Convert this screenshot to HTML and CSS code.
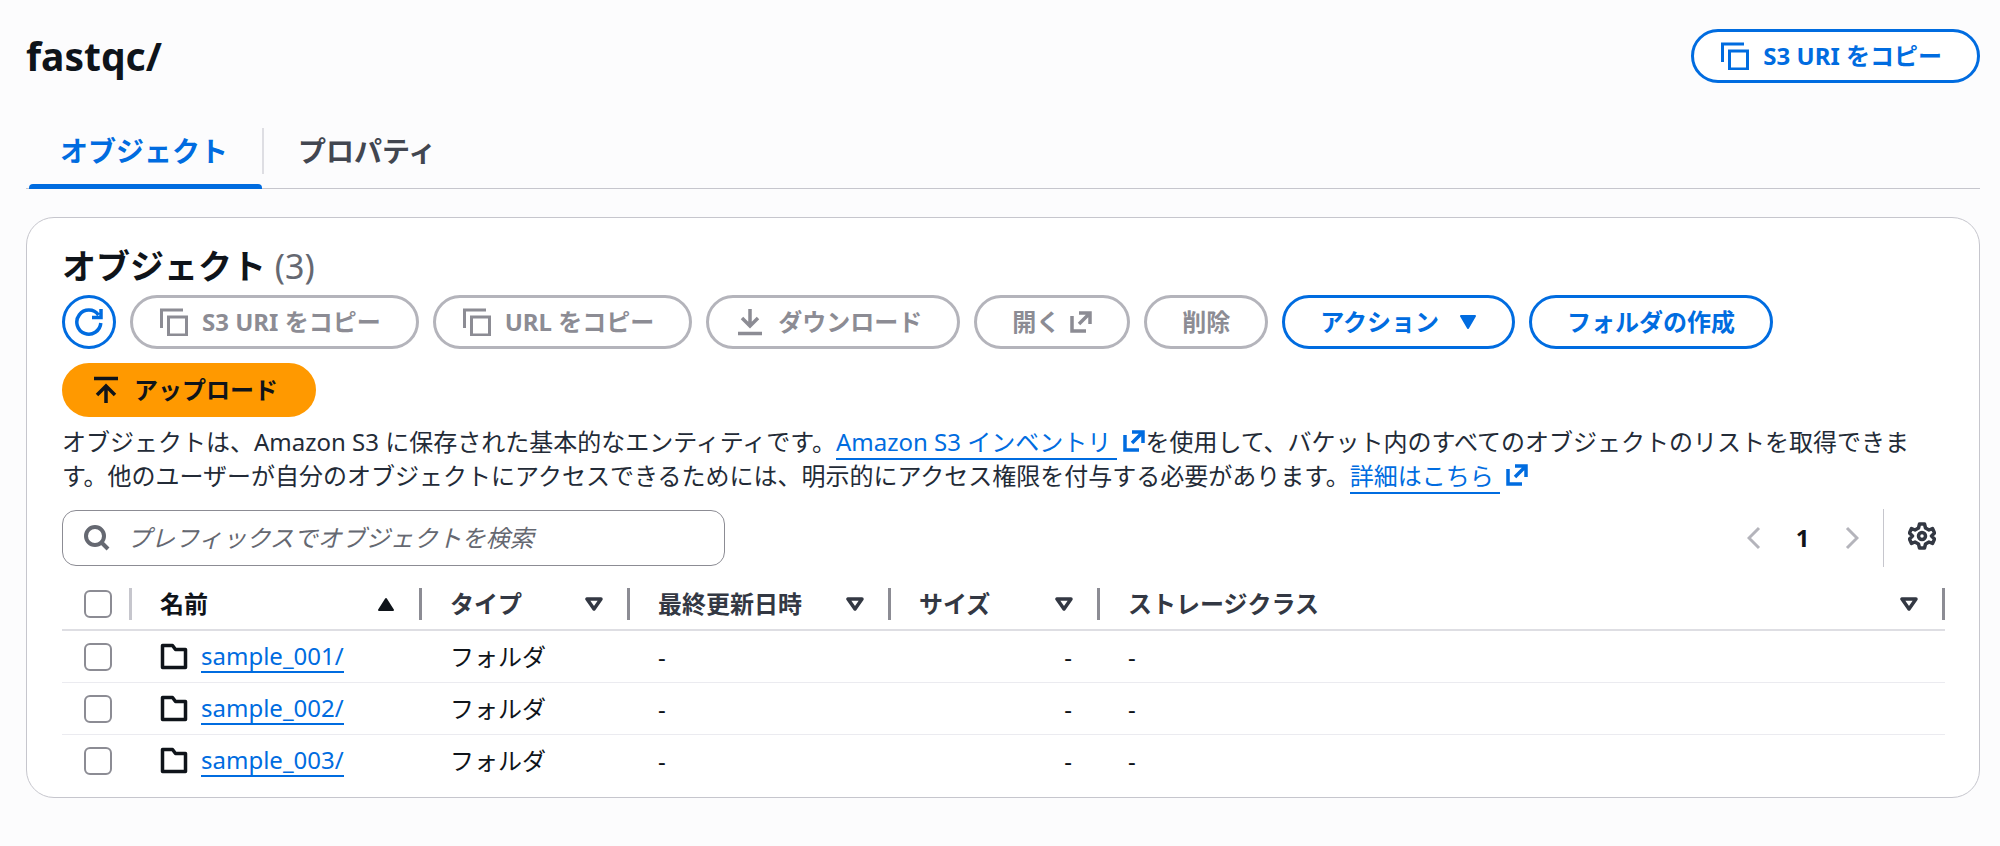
FILE: index.html
```
<!DOCTYPE html>
<html lang="ja">
<head>
    <meta charset="UTF-8">
    <meta name="viewport" content="width=device-width, initial-scale=1.0">
    <title>fastqc/</title>
    <link rel="stylesheet" href="styles.css">
</head>
<body>

    <!-- Shared icons -->
    <svg class="sprite" aria-hidden="true">
        <symbol id="icon-copy" viewBox="0 0 28 28">
            <path d="M1.500 20V2H23M8.500 9h18v18h-18z" fill="none" stroke="currentColor" stroke-width="3"/>
        </symbol>
        <symbol id="icon-external" viewBox="0 0 22 22">
            <path d="M2 5v15h14M9 2h11v11M20 2L9 13" fill="none" stroke="currentColor" stroke-width="3.500"/>
        </symbol>
        <symbol id="icon-folder" viewBox="0 0 28 28">
            <path d="M2.500 2.500h10l3 4h10v18h-23z" fill="none" stroke="currentColor" stroke-width="3.500" stroke-linejoin="round"/>
        </symbol>
        <symbol id="icon-sort" viewBox="0 0 18 14">
            <path d="M2 2h14L9 12z" fill="none" stroke="currentColor" stroke-width="3.500" stroke-linejoin="round"/>
        </symbol>
    </svg>

    <header class="page-header">
        <h1>fastqc/</h1>
        <button type="button" class="btn"><svg class="icon lead"><use href="#icon-copy"/></svg>S3 URI をコピー</button>
    </header>

    <nav class="tabs">
        <a href="#objects" class="tab active">オブジェクト</a>
        <a href="#properties" class="tab">プロパティ</a>
    </nav>

    <main class="card" id="objects">
        <h2>オブジェクト <span class="count">(3)</span></h2>

        <div class="actions">
            <button type="button" class="btn round" aria-label="更新">
                <svg class="icon" viewBox="0 0 28 28"><path d="M25.800 15A12 12 0 1 1 23.500 7M26 1v8.500h-9" fill="none" stroke="currentColor" stroke-width="3.500"/></svg>
            </button>
            <button type="button" class="btn" disabled><svg class="icon lead"><use href="#icon-copy"/></svg>S3 URI をコピー</button>
            <button type="button" class="btn" disabled><svg class="icon lead"><use href="#icon-copy"/></svg>URL をコピー</button>
            <button type="button" class="btn" disabled>
                <svg class="icon lead" viewBox="0 0 28 28"><path d="M14 1v17M6 10l8 8 8-8M2 25.500h24" fill="none" stroke="currentColor" stroke-width="3.500"/></svg>ダウンロード
            </button>
            <button type="button" class="btn" disabled>開く<svg class="icon external"><use href="#icon-external"/></svg></button>
            <button type="button" class="btn" disabled>削除</button>
            <button type="button" class="btn">アクション<svg class="caret" viewBox="0 0 18 14"><path d="M2 1h14L9 13z" fill="currentColor" stroke="currentColor" stroke-width="2" stroke-linejoin="round"/></svg></button>
            <button type="button" class="btn">フォルダの作成</button>
            <button type="button" class="btn primary">
                <svg class="icon lead" viewBox="0 0 28 28"><path d="M2 2.500h24M14 27V10M5 19l9-9 9 9" fill="none" stroke="currentColor" stroke-width="3.500"/></svg>アップロード
            </button>
        </div>

        <p class="description">オブジェクトは、Amazon S3 に保存された基本的なエンティティです。<a href="#inventory"><span class="link-text">Amazon S3 インベントリ </span><svg class="icon external"><use href="#icon-external"/></svg></a>を使用して、バケット内のすべてのオブジェクトのリストを取得できます。他のユーザーが自分のオブジェクトにアクセスできるためには、明示的にアクセス権限を付与する必要があります。<a href="#details"><span class="link-text">詳細はこちら </span><svg class="icon external"><use href="#icon-external"/></svg></a></p>

        <div class="toolbar">
            <label class="search">
                <svg class="search-icon" viewBox="0 0 26 26"><circle cx="11" cy="11" r="9" fill="none" stroke="currentColor" stroke-width="4"/><path d="M17 17l7 7" stroke="currentColor" stroke-width="4"/></svg>
                <input type="search" placeholder="プレフィックスでオブジェクトを検索" aria-label="プレフィックスでオブジェクトを検索">
            </label>
            <div class="pagination">
                <button type="button" class="page-btn" aria-label="前のページ" disabled><svg class="chevron" viewBox="0 0 14 24"><path d="M12 2L2 12l10 10" fill="none" stroke="currentColor" stroke-width="3"/></svg></button>
                <button type="button" class="page-btn">1</button>
                <button type="button" class="page-btn" aria-label="次のページ" disabled><svg class="chevron" viewBox="0 0 14 24"><path d="M2 2l10 10L2 22" fill="none" stroke="currentColor" stroke-width="3"/></svg></button>
            </div>
            <button type="button" class="settings" aria-label="設定">
                <svg class="icon" viewBox="0 0 28 28" fill="none" stroke="currentColor" stroke-width="3.500" stroke-linejoin="round"><path d="M11.500 2h5l1 4 3.500 2 3.500-1.500 2 4.500-3 3 3 3-2 4.500L21 20l-3.500 2-1 4h-5l-1-4L7 20l-3.500 1.500-2-4.500 3-3-3-3 2-4.500L7 8l3.500-2z"/><circle cx="14" cy="14" r="3.500"/></svg>
            </button>
        </div>

        <table>
            <colgroup>
                <col class="col-check">
                <col class="col-name">
                <col class="col-type">
                <col class="col-date">
                <col class="col-size">
                <col>
            </colgroup>
            <thead>
                <tr>
                    <th class="light"><div class="head"><input type="checkbox" aria-label="すべて選択"></div></th>
                    <th class="sorted"><div class="head">名前<svg class="sort" viewBox="0 0 18 14"><path d="M2 13h14L9 2z" fill="currentColor" stroke="currentColor" stroke-width="2" stroke-linejoin="round"/></svg></div></th>
                    <th><div class="head">タイプ<svg class="sort"><use href="#icon-sort"/></svg></div></th>
                    <th><div class="head">最終更新日時<svg class="sort"><use href="#icon-sort"/></svg></div></th>
                    <th><div class="head">サイズ<svg class="sort"><use href="#icon-sort"/></svg></div></th>
                    <th><div class="head">ストレージクラス<svg class="sort"><use href="#icon-sort"/></svg></div></th>
                </tr>
            </thead>
            <tbody>
                <tr>
                    <td><input type="checkbox" aria-label="sample_001/"></td>
                    <td><div class="name"><svg class="icon"><use href="#icon-folder"/></svg><a href="#sample_001" class="link-text">sample_001/</a></div></td>
                    <td>フォルダ</td>
                    <td>-</td>
                    <td class="size">-</td>
                    <td>-</td>
                </tr>
                <tr>
                    <td><input type="checkbox" aria-label="sample_002/"></td>
                    <td><div class="name"><svg class="icon"><use href="#icon-folder"/></svg><a href="#sample_002" class="link-text">sample_002/</a></div></td>
                    <td>フォルダ</td>
                    <td>-</td>
                    <td class="size">-</td>
                    <td>-</td>
                </tr>
                <tr>
                    <td><input type="checkbox" aria-label="sample_003/"></td>
                    <td><div class="name"><svg class="icon"><use href="#icon-folder"/></svg><a href="#sample_003" class="link-text">sample_003/</a></div></td>
                    <td>フォルダ</td>
                    <td>-</td>
                    <td class="size">-</td>
                    <td>-</td>
                </tr>
            </tbody>
        </table>
    </main>

</body>
</html>
```
FILE: styles.css
```
/* General Styles */
* {
    box-sizing: border-box;
}

body {
    font-family: "Noto Sans", "Noto Sans CJK JP", sans-serif;
    font-size: 24px;
    line-height: 34px;
    margin: 0;
    padding: 29px 20px 29px 26px;
    background-color: #fcfcfd;
    color: #0f141a;
}

h1, h2, p {
    margin: 0;
}

a {
    color: #006ce0;
    text-decoration: none;
}

button, input {
    font: inherit;
    color: inherit;
}

.sprite {
    display: none;
}

.icon {
    width: 28px;
    height: 28px;
    flex: none;
}

.icon.external {
    width: 22px;
    height: 22px;
}

/* Header */
.page-header {
    display: flex;
    align-items: center;
    justify-content: space-between;
}

h1 {
    font-size: 39px;
    line-height: 54px;
}

/* Buttons */
.btn {
    display: flex;
    align-items: center;
    height: 54px;
    padding: 0 35px;
    border: 3px solid #006ce0;
    border-radius: 28px;
    background: white;
    color: #006ce0;
    font-weight: 700;
    white-space: nowrap;
}

.btn:disabled {
    border-color: #b4b4bb;
    color: #8c8c94;
}

.btn .lead {
    margin-left: -8px;
    margin-right: 14px;
}

.btn .external {
    margin-left: 10px;
}

.btn.round {
    width: 54px;
    padding: 0;
    justify-content: center;
}

.btn.primary {
    background: #ff9900;
    border-color: #ff9900;
    color: #0f141a;
}

.caret {
    width: 18px;
    height: 14px;
    margin-left: 20px;
}

/* Tabs */
.tabs {
    display: flex;
    align-items: center;
    height: 76px;
    margin-top: 30px;
    border-bottom: 1px solid #c6c6cd;
    font-size: 28px;
    font-weight: 700;
}

.tab {
    display: flex;
    align-items: center;
    height: 46px;
    padding: 0 34px;
    color: #424650;
}

.tab.active {
    position: relative;
    border-right: 2px solid #dedee3;
    color: #006ce0;
}

.tab.active::after {
    content: "";
    position: absolute;
    left: 3px;
    right: 0;
    bottom: -15px;
    height: 5px;
    border-radius: 4px 4px 0 0;
    background: #006ce0;
}

/* Objects card */
.card {
    margin-top: 28px;
    padding: 27px 34px 10px 35px;
    border: 1px solid #c6c6cd;
    border-radius: 28px;
    background: white;
}

h2 {
    margin-bottom: 8px;
    font-size: 34px;
    line-height: 42px;
}

.count {
    color: #656871;
    font-weight: 400;
}

.actions {
    display: flex;
    flex-wrap: wrap;
    gap: 14px;
}

.description {
    margin-top: 8px;
    color: #232b37;
}

.description .external {
    margin-left: 6px;
    vertical-align: -1px;
}

.link-text {
    border-bottom: 2px solid #006ce0;
    line-height: 30px;
}

/* Search and paging */
.toolbar {
    display: flex;
    align-items: center;
    margin-top: 16px;
}

.search {
    display: flex;
    align-items: center;
    gap: 17px;
    width: 663px;
    height: 56px;
    padding: 0 21px;
    border: 1px solid #8c8c94;
    border-radius: 14px;
    color: #656871;
}

.search-icon {
    width: 26px;
    height: 26px;
    flex: none;
}

.search input {
    flex: 1;
    min-width: 0;
    padding: 0;
    border: none;
    outline: none;
    background: none;
}

.search input::placeholder {
    color: #656871;
    font-style: italic;
    opacity: 1;
}

.pagination {
    display: flex;
    margin-left: auto;
    padding-right: 7px;
}

.page-btn, .settings {
    display: flex;
    align-items: center;
    justify-content: center;
    padding: 0;
    border: none;
    background: none;
}

.page-btn {
    width: 49px;
    height: 34px;
    font-weight: 700;
}

.page-btn:disabled {
    color: #b4b4bb;
}

.chevron {
    width: 14px;
    height: 24px;
}

.settings {
    width: 62px;
    height: 58px;
    padding: 0 0 4px 14px;
    border-left: 1px solid #c6c6cd;
    color: #333843;
}

/* Table */
table {
    width: 100%;
    margin-top: 11px;
    border-collapse: separate;
    border-spacing: 0;
    table-layout: fixed;
}

.col-check {
    width: 70px;
}

.col-name {
    width: 290px;
}

.col-type {
    width: 208px;
}

.col-date {
    width: 261px;
}

.col-size {
    width: 209px;
}

th {
    height: 53px;
    padding: 0;
    border-bottom: 2px solid #dedee3;
    color: #333843;
    text-align: left;
}

.head {
    display: flex;
    align-items: center;
    justify-content: space-between;
    height: 32px;
    padding: 0 24px 0 28px;
    border-right: 3px solid #8c8c94;
}

.light .head {
    padding: 0 0 0 22px;
    border-color: #c6c6cd;
}

.sorted {
    color: #0f141a;
}

.sort {
    width: 18px;
    height: 14px;
}

td {
    height: 52px;
    padding: 0 28px;
    border-bottom: 1px solid #ebebf0;
}

td:first-child {
    padding: 0 0 0 22px;
}

tbody tr:last-child td {
    border-bottom: none;
}

.name {
    display: flex;
    align-items: center;
    gap: 13px;
}

.size {
    text-align: right;
}

input[type="checkbox"] {
    display: block;
    appearance: none;
    width: 28px;
    height: 28px;
    margin: 0;
    border: 2px solid #8c8c94;
    border-radius: 6px;
    background: white;
}

input[type="checkbox"]:checked {
    border-color: #006ce0;
    background: #006ce0;
}
```
